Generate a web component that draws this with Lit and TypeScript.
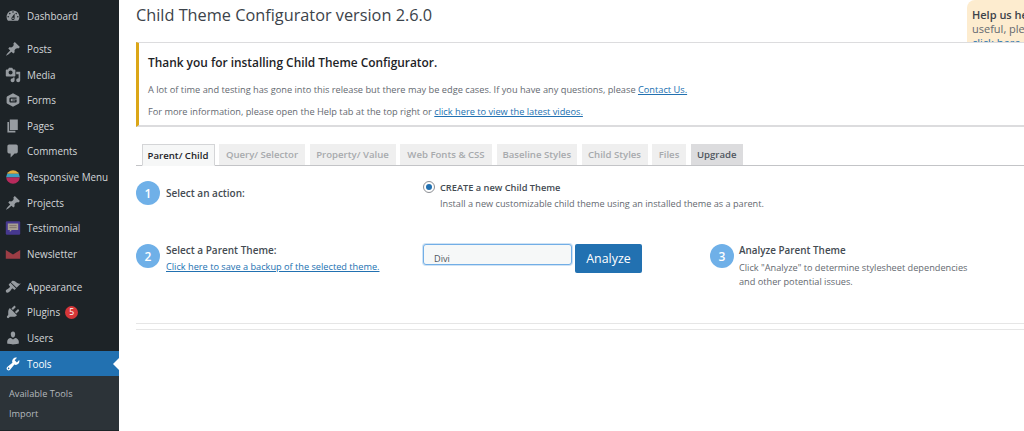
import { LitElement, html, css, svg } from "lit";
import { customElement } from "lit/decorators.js";

const P: Record<string, string> = {
  dashboard: "M3.76 16h12.48c1.1-1.37 1.76-3.11 1.76-5 0-4.42-3.58-8-8-8s-8 3.58-8 8c0 1.89.66 3.63 1.76 5zM10 4c.55 0 1 .45 1 1s-.45 1-1 1-1-.45-1-1 .45-1 1-1zM6 6c.55 0 1 .45 1 1s-.45 1-1 1-1-.45-1-1 .45-1 1-1zm8 0c.55 0 1 .45 1 1s-.45 1-1 1-1-.45-1-1 .45-1 1-1zm-5.37 5.55L12 7v6c0 1.1-.9 2-2 2s-2-.9-2-2c0-.57.24-1.08.63-1.45zM4 10c.55 0 1 .45 1 1s-.45 1-1 1-1-.45-1-1 .45-1 1-1zm12 0c.55 0 1 .45 1 1s-.45 1-1 1-1-.45-1-1 .45-1 1-1zm-5 3c0-.55-.45-1-1-1s-1 .45-1 1 .45 1 1 1 1-.45 1-1z",
  pin: "M10.44 3.02l1.82-1.82 6.36 6.35-1.83 1.82c-1.05-.68-2.48-.57-3.41.36l-.75.75c-.92.93-1.04 2.35-.35 3.41l-1.83 1.82-2.41-2.41-2.8 2.79c-.42.42-3.38 2.71-3.8 2.29s1.86-3.39 2.28-3.81l2.79-2.79L4.1 9.36l1.83-1.82c1.05.69 2.48.57 3.4-.36l.75-.75c.93-.92 1.05-2.35.36-3.41z",
  media: "M13 11V4c0-.55-.45-1-1-1h-1.67L9 1H5L3.67 3H2c-.55 0-1 .45-1 1v7c0 .55.45 1 1 1h10c.55 0 1-.45 1-1zM7 4.5c1.38 0 2.5 1.12 2.5 2.5S8.38 9.5 7 9.5 4.5 8.38 4.5 7 5.62 4.5 7 4.5zM14 6h5v10.5c0 1.38-1.12 2.5-2.5 2.5S14 17.88 14 16.5s1.12-2.5 2.5-2.5c.17 0 .34.02.5.05V9h-3V6zm-4 8.05V13h2v3.5c0 1.38-1.12 2.5-2.5 2.5S7 17.88 7 16.5 8.12 14 9.5 14c.17 0 .34.02.5.05z",
  pages: "M6 15V2h10v13H6zm-1 1h8v2H3V5h2v11z",
  comments: "M5 2h9c1.1 0 2 .9 2 2v7c0 1.1-.9 2-2 2h-2l-5 5v-5H5c-1.1 0-2-.9-2-2V4c0-1.1.9-2 2-2z",
  appearance: "M14.48 11.06L7.41 3.99l1.5-1.5c.5-.56 2.3-.47 3.51.32 1.21.8 1.43 1.28 2.91 2.1 1.18.64 2.45 1.26 4.45.85zm-.71.71L6.7 4.7 4.93 6.47c-.39.39-.39 1.02 0 1.41l1.06 1.06c.39.39.39 1.03 0 1.42-.6.6-1.43 1.11-2.21 1.69-.35.26-.7.53-1.01.84C1.43 13.23.18 15.03 1.6 16.44c1.43 1.42 3.2.17 4.53-1.17.3-.31.58-.66.84-1.01.58-.78 1.09-1.61 1.69-2.21.39-.39 1.02-.39 1.41 0l1.06 1.06c.39.39 1.02.39 1.41 0z",
  plugins: "M13.11 4.36L9.87 7.6 8 5.73l3.24-3.24c.35-.34 1.05-.2 1.56.32.52.51.66 1.21.31 1.55zm-8 1.77l.91-1.12 9.01 9.01-1.19.84c-.71.71-2.63 1.16-3.82 1.16H6.14L4.9 17.26c-.59.59-1.54.59-2.12 0-.59-.58-.59-1.53 0-2.12l1.24-1.24v-3.88c0-1.13.4-3.19 1.09-3.89zm7.26 3.97l3.24-3.24c.34-.35 1.04-.21 1.55.31.52.51.66 1.21.31 1.55l-3.24 3.25z",
  users: "M10 9.25c-2.27 0-2.73-3.44-2.73-3.44C7 4.02 7.82 2 9.97 2c2.16 0 2.98 2.02 2.71 3.81 0 0-.41 3.44-2.68 3.44zm0 2.57L12.72 10c2.39 0 4.52 2.33 4.52 4.53v2.49s-3.65 1.13-7.24 1.13c-3.65 0-7.24-1.13-7.24-1.13v-2.49c0-2.25 1.94-4.48 4.47-4.48z",
  tools: "M16.68 9.77c-1.34 1.34-3.3 1.67-4.95.99l-5.41 6.52c-.99.99-2.59.99-3.58 0s-.99-2.59 0-3.57l6.52-5.42c-.68-1.65-.35-3.61.99-4.95 1.28-1.28 3.12-1.62 4.72-1.06l-2.89 2.89 2.82 2.82 2.86-2.87c.53 1.58.18 3.39-1.08 4.65zM3.81 16.21c.4.39 1.04.39 1.43 0 .4-.4.4-1.04 0-1.43-.39-.4-1.03-.4-1.43 0-.39.39-.39 1.03 0 1.43z",
  forms: "M10 1.5l7 3.9c.6.3 1 .9 1 1.6v6c0 .7-.4 1.3-1 1.6l-7 3.9-7-3.9c-.6-.3-1-.9-1-1.6V7c0-.7.4-1.3 1-1.6zM5.5 9v2.6c0 1 .7 1.6 1.6 1.6h6.3c.6 0 1.1-.5 1.1-1.1V9.3H9.2v1.4h3.6v.9H7.3V8.9c0-.4.3-.6.6-.6h6.6V6.9H7.2C6.2 6.9 5.5 7.8 5.5 9z",
};

type Item = { k: string; label: string; gap?: boolean; badge?: string; cur?: boolean };
const ITEMS: Item[] = [
  { k: "dashboard", label: "Dashboard" },
  { k: "pin", label: "Posts", gap: true },
  { k: "media", label: "Media" },
  { k: "forms", label: "Forms" },
  { k: "pages", label: "Pages" },
  { k: "comments", label: "Comments" },
  { k: "responsive", label: "Responsive Menu" },
  { k: "pin", label: "Projects" },
  { k: "testimonial", label: "Testimonial" },
  { k: "newsletter", label: "Newsletter" },
  { k: "appearance", label: "Appearance", gap: true },
  { k: "plugins", label: "Plugins", badge: "5" },
  { k: "users", label: "Users" },
  { k: "tools", label: "Tools", cur: true },
];

function icon(k: string) {
  if (k === "responsive")
    return svg`<svg class="ic" viewBox="0 0 20 20"><defs><clipPath id="rc"><circle cx="10" cy="10" r="8.5"/></clipPath></defs><g clip-path="url(#rc)"><rect x="0" y="0" width="20" height="6" fill="#e0b040"/><rect x="0" y="6" width="20" height="4.5" fill="#3a9fc0"/><rect x="0" y="10.5" width="20" height="8.5" fill="#b82a5c"/></g></svg>`;
  if (k === "testimonial")
    return svg`<svg class="ic" viewBox="0 0 20 20"><rect x="1" y="1.5" width="18" height="17" rx="1.5" fill="#46388f"/><path d="M3.5 4.5h13v8h-8l-2.5 2.5v-2.5H3.5z" fill="#a89f92"/><path d="M5.5 7h9M5.5 9.5h9" stroke="#7a6c66" stroke-width="1"/></svg>`;
  if (k === "newsletter")
    return svg`<svg class="ic" viewBox="0 0 20 20"><path d="M1 5l9 5.5L19 5v11H1z" fill="#9c3d45"/></svg>`;
  return svg`<svg class="ic" viewBox="0 0 20 20"><path d=${P[k]} fill="currentColor" fill-rule="evenodd"/></svg>`;
}

const TABS: [string, number][] = [
  ["Query/ Selector", 86],
  ["Property/ Value", 86],
  ["Web Fonts & CSS", 92],
  ["Baseline Styles", 80.5],
  ["Child Styles", 66],
  ["Files", 34],
];

@customElement("app-root")
export class AppRoot extends LitElement {
  static styles = css`
    :host { display: block; width: 1024px; height: 431px; overflow: hidden; background: #fff;
      font-family: "Open Sans", "Noto Sans", sans-serif; }
    * { box-sizing: border-box; }
    .page { display: flex; height: 431px; }
    .side { width: 119px; flex: none; background: #1d2327; padding-top: 3.3px; }
    .item { height: 25.55px; display: flex; align-items: center; padding-left: 6px; color: #d3d6d9; font-size: 9.9px; position: relative; }
    .item.gap { margin-top: 7.7px; }
    .item .ic { width: 16px; height: 16px; flex: none; color: #979ca1; margin-right: 6px; margin-left: -1px; }
    .item.cur { background: #2271b1; color: #fff; }
    .item.cur .ic { color: #fff; }
    .item.cur::after { content: ""; position: absolute; right: 0; top: 7px; border: 6px solid transparent; border-right-color: #fff; border-left-width: 0; }
    .badge { width: 13px; height: 13px; border-radius: 50%; background: #d63638; color: #fff; font-size: 8.6px; display: flex; align-items: center; justify-content: center; margin-left: 5px; }
    .sub { background: #2c3338; padding: 6.5px 9px; height: 54px; }
    .sub div { color: #b4b9be; font-size: 9.2px; height: 20.5px; display: flex; align-items: center; }
    .main { flex: 1; min-width: 0; padding-left: 17px; }
    .top { height: 42px; display: flex; justify-content: space-between; overflow: hidden; }
    h1 { margin: 0; padding-top: 3px; font-size: 16.3px; font-weight: 400; color: #3c434a; line-height: 24px; white-space: nowrap; }
    .help { width: 57px; height: 42px; background: #fdeccf; border-top-left-radius: 8px; padding: 7.5px 0 0 5px; font-size: 11px; line-height: 14px; color: #646970; white-space: nowrap; overflow: hidden; }
    .help b { color: #3c434a; font-weight: 600; }
    a { color: #2271b1; text-decoration: underline; }
    .notice { height: 85px; border: 1px solid #dcdcde; border-width: 1px 0 2px; border-left: 3px solid #dba617; padding: 9px 0 0 9px; }
    .notice h2 { margin: 0; font-size: 11.9px; line-height: 20px; font-weight: 600; color: #1d2327; }
    .notice p { margin: 0; font-size: 9.24px; line-height: 21.5px; color: #646970; }
    .notice p:first-of-type { margin-top: 7px; }
    .tabs { margin-top: 17px; height: 22px; border-bottom: 1px solid #c3c4c7; display: flex; gap: 4.5px; padding-left: 5.5px; align-items: flex-end; }
    .tab { height: 21px; background: #efefef; color: #a7aaad; font-size: 9.6px; font-weight: 600; display: flex; align-items: center; justify-content: center; white-space: nowrap; }
    .tab.on { background: #f6f7f7; color: #1d2327; border: 1px solid #d4d5d7; border-bottom: 1px solid #f6f7f7; height: 22px; margin-bottom: -1px; }
    .tab.up { background: #dcdcde; color: #50575e; }
    .row { display: flex; }
    .row1 { height: 78px; padding-top: 15px; }
    .row2 { height: 79px; }
    .num { width: 24px; height: 24px; border-radius: 50%; background: #6fb0e8; color: #fff; font-size: 12px; font-weight: 600; display: flex; align-items: center; justify-content: center; flex: none; }
    .c1 { width: 287px; flex: none; display: flex; gap: 6px; }
    .lab { font-size: 10px; color: #444b52; font-weight: 600; }
    .lab1 { line-height: 25px; }
    .lab2 { line-height: 17px; margin-top: -2px; }
    .lnk { font-size: 9.2px; line-height: 15px; display: block; }
    .radio { width: 12px; height: 12px; border-radius: 50%; border: 1px solid #8c8f94; display: flex; align-items: center; justify-content: center; margin-right: 5px; flex: none; background: #fff; }
    .radio i { width: 6px; height: 6px; border-radius: 50%; background: #2271b1; display: block; }
    .opt { display: flex; }
    .opt .t { font-size: 9.25px; font-weight: 600; color: #444b52; line-height: 14px; }
    .opt .d { font-size: 9.17px; color: #646970; line-height: 18px; white-space: nowrap; }
    .sel { width: 149px; height: 21px; border: 1px solid #72aee6; border-radius: 3px; background: #f6f8f8; box-shadow: 0 0 0 1px #cfe3f5; font-size: 9.2px; color: #50575e; padding: 6px 0 0 10px; line-height: 15px; }
    .btn { width: 67px; height: 29px; margin-left: 3px; background: #2271b1; border-radius: 2px; color: #fff; font-size: 12.4px; display: flex; align-items: center; justify-content: center; }
    .c3 { display: flex; gap: 5px; margin-left: 68px; }
    .c3 .t { font-size: 9.9px; font-weight: 600; color: #444b52; line-height: 17px; margin-top: -2px; }
    .c3 .d { font-size: 9.2px; color: #646970; line-height: 13.5px; width: 240px; margin-top: 2px; }
    .rule { height: 7px; border-top: 1px solid #e6e6e6; border-bottom: 1px solid #e6e6e6; }
  `;

  render() {
    return html`<div class="page">
      <nav class="side">
        ${ITEMS.map((i) => html`<div class="item ${i.gap ? "gap" : ""} ${i.cur ? "cur" : ""}">${icon(i.k)}<span>${i.label}</span>${i.badge ? html`<span class="badge">${i.badge}</span>` : ""}</div>`)}
        <div class="sub"><div>Available Tools</div><div>Import</div></div>
      </nav>
      <main class="main">
        <div class="top">
          <h1>Child Theme Configurator version 2.6.0</h1>
          <div class="help"><b>Help us help you</b><br />useful, please<br /><a>click here</a></div>
        </div>
        <section class="notice">
          <h2>Thank you for installing Child Theme Configurator.</h2>
          <p>A lot of time and testing has gone into this release but there may be edge cases. If you have any questions, please <a>Contact Us.</a></p>
          <p>For more information, please open the Help tab at the top right or <a>click here to view the latest videos.</a></p>
        </section>
        <div class="tabs">
          <div class="tab on" style="width:73px">Parent/ Child</div>
          ${TABS.map(([t, w]) => html`<div class="tab" style="width:${w}px">${t}</div>`)}
          <div class="tab up" style="width:52.5px">Upgrade</div>
        </div>
        <div class="row row1">
          <div class="c1"><div class="num">1</div><div class="lab lab1">Select an action:</div></div>
          <div class="opt"><div class="radio"><i></i></div><div><div class="t">CREATE a new Child Theme</div><div class="d">Install a new customizable child theme using an installed theme as a parent.</div></div></div>
        </div>
        <div class="row row2">
          <div class="c1"><div class="num">2</div><div><div class="lab lab2">Select a Parent Theme:</div><a class="lnk">Click here to save a backup of the selected theme.</a></div></div>
          <div class="sel">Divi</div>
          <div class="btn">Analyze</div>
          <div class="c3"><div class="num">3</div><div><div class="t">Analyze Parent Theme</div><div class="d">Click "Analyze" to determine stylesheet dependencies and other potential issues.</div></div></div>
        </div>
        <div class="rule"></div>
      </main>
    </div>`;
  }
}
